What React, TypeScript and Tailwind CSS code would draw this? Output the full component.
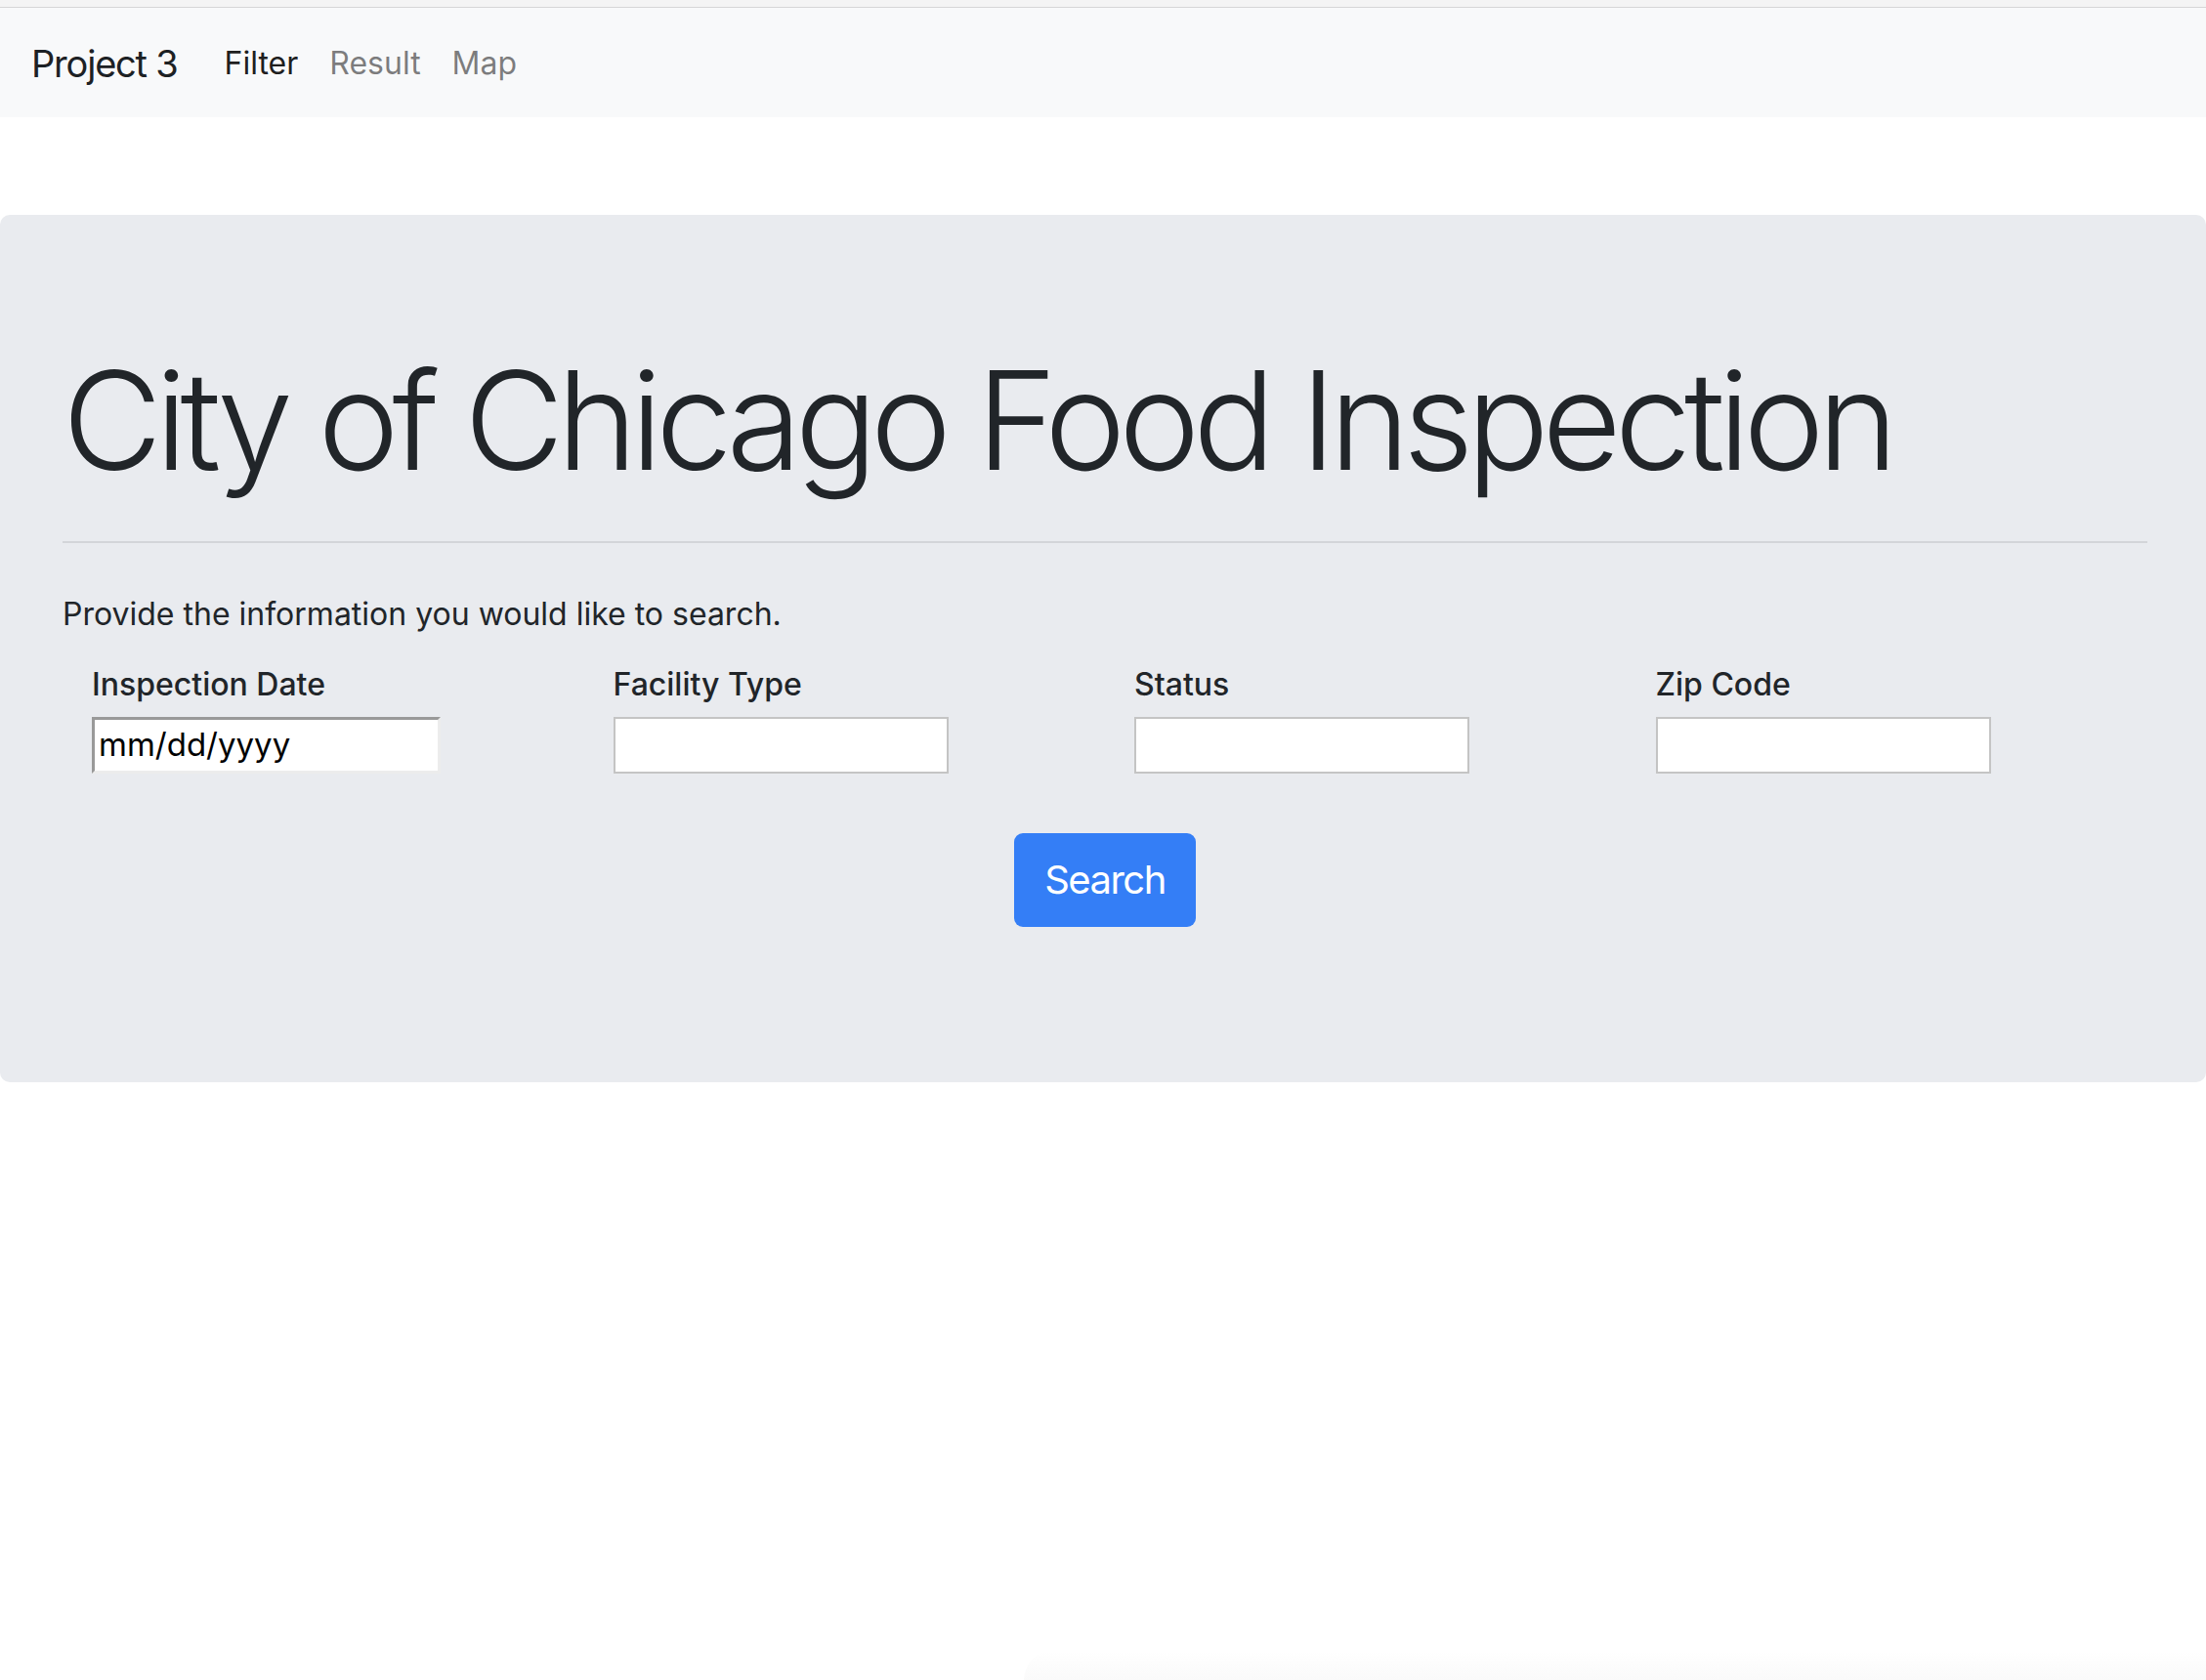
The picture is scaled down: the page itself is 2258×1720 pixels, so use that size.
import React from "react";

const fields = [
  { label: "Inspection Date", kind: "date" },
  { label: "Facility Type", kind: "text" },
  { label: "Status", kind: "text" },
  { label: "Zip Code", kind: "text" },
];

export default function App() {
  return (
    <div className="min-h-[1720px] flex flex-col bg-white font-['Inter','Liberation_Sans',sans-serif] text-[#212529]">
      <div className="h-[8px] bg-[#f4f4f4] border-b border-[#d6d6d6]" />
      <nav className="h-[112px] bg-[#f8f9fa] flex items-center px-[32px] pt-[2px]">
        <span className="text-[38px] leading-[60px] mr-[32px] text-[#1d2124] tracking-[-1.2px]">
          Project 3
        </span>
        <a className="px-[16px] text-[32px] leading-[48px] text-black/90">Filter</a>
        <a className="px-[16px] text-[32px] leading-[48px] text-black/50">Result</a>
        <a className="px-[16px] text-[32px] leading-[48px] text-black/50">Map</a>
      </nav>

      <div className="mt-[100px] rounded-[10px] bg-[#e9ebef] pl-[64px] pr-[60px] pt-[138px] pb-[159px]">
        <h1 className="text-[140px] leading-[144px] font-light tracking-[-7px] text-[#212529]">
          City of Chicago Food Inspection
        </h1>
        <hr className="mt-[52px] border-0 h-[2px] bg-[#d3d5d9]" />
        <p className="mt-[49px] text-[32px] leading-[48px]">
          Provide the information you would like to search.
        </p>

        <div className="mt-[24px] grid grid-cols-4">
          {fields.map((f) => (
            <div key={f.label} className="pl-[30px] flex flex-col items-start">
              <label className="text-[32px] leading-[48px] font-medium">{f.label}</label>
              {f.kind === "date" ? (
                <div className="mt-[9px] w-[357px] h-[58px] bg-white border-[3px] border-t-[#999999] border-l-[#999999] border-b-[#ececec] border-r-[#ececec] flex items-center px-[4px] text-[33px] text-black">
                  mm/dd/yyyy
                </div>
              ) : (
                <input
                  type="text"
                  className="mt-[9px] w-[343px] h-[58px] bg-white border-2 border-[#c4c4c4] outline-none"
                />
              )}
            </div>
          ))}
        </div>

        <div className="mt-[61px] flex justify-center">
          <button className="h-[96px] w-[186px] rounded-[9px] bg-[#347ef6] text-white text-[40px] leading-[60px] tracking-[-1.5px]">
            Search
          </button>
        </div>
      </div>

      <div className="mt-auto flex justify-end">
        <div className="w-[1210px] h-[30px] rounded-tl-[80px] bg-gradient-to-b from-white to-[#fafafa]" />
      </div>
    </div>
  );
}
